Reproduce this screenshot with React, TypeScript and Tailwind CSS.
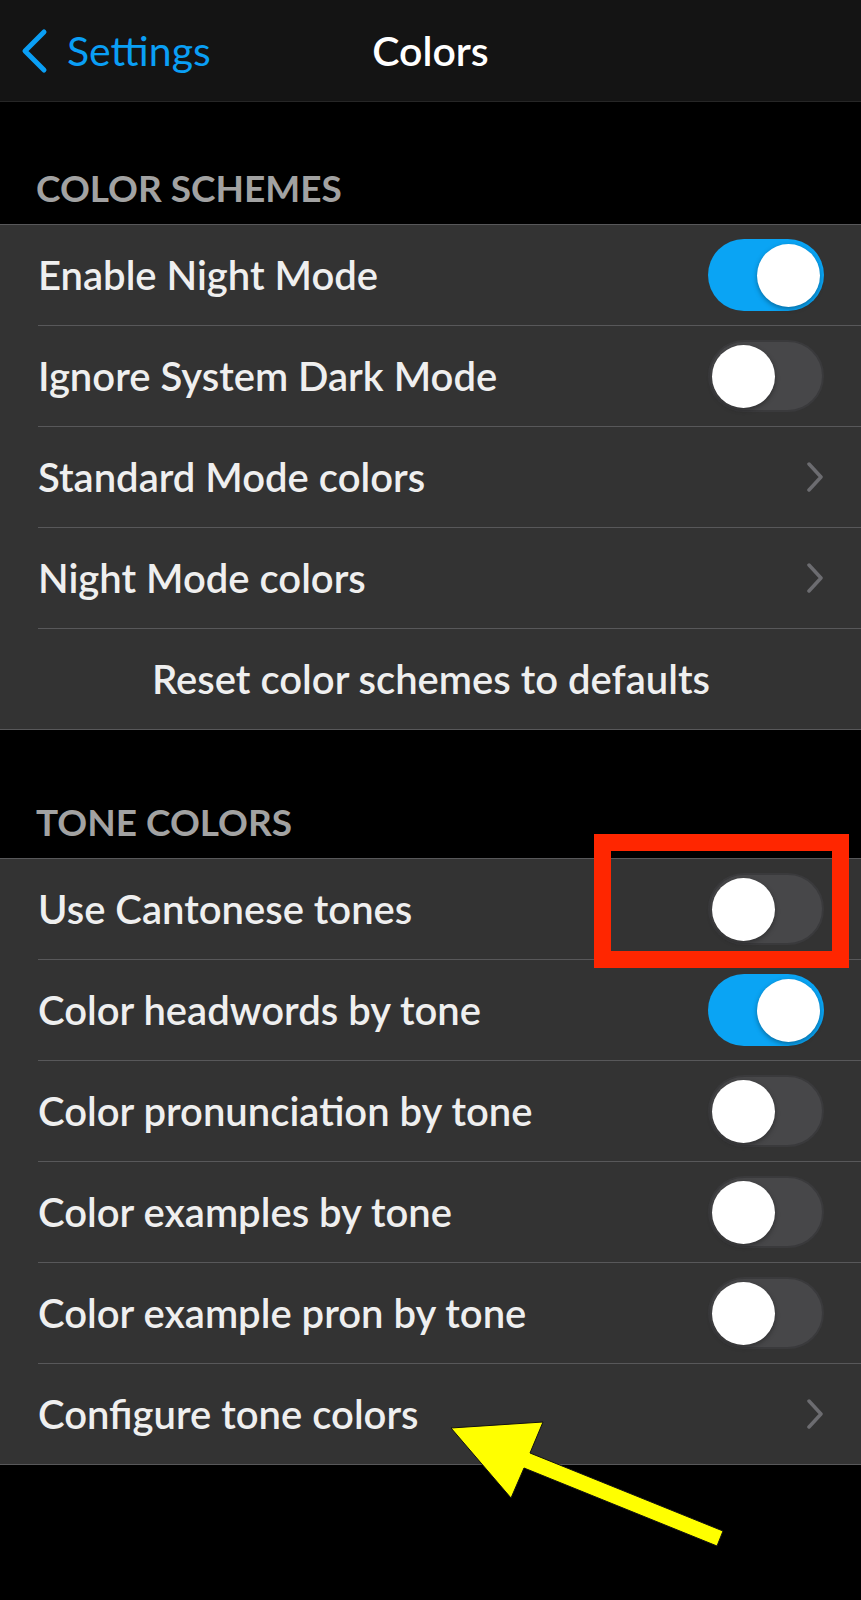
import { ReactNode } from 'react';

type Row = {
  label: string;
  kind: 'toggle' | 'link' | 'action';
  on?: boolean;
};

const schemeRows: Row[] = [
  { label: 'Enable Night Mode', kind: 'toggle', on: true },
  { label: 'Ignore System Dark Mode', kind: 'toggle', on: false },
  { label: 'Standard Mode colors', kind: 'link' },
  { label: 'Night Mode colors', kind: 'link' },
  { label: 'Reset color schemes to defaults', kind: 'action' },
];

const toneRows: Row[] = [
  { label: 'Use Cantonese tones', kind: 'toggle', on: false },
  { label: 'Color headwords by tone', kind: 'toggle', on: true },
  { label: 'Color pronunciation by tone', kind: 'toggle', on: false },
  { label: 'Color examples by tone', kind: 'toggle', on: false },
  { label: 'Color example pron by tone', kind: 'toggle', on: false },
  { label: 'Configure tone colors', kind: 'link' },
];

function Toggle({ on }: { on: boolean }) {
  return (
    <div
      className={
        on
          ? 'w-[116px] h-[72px] rounded-full bg-[#0aa4f4] flex items-center justify-end px-[4px]'
          : 'w-[116px] h-[72px] rounded-full bg-[#474749] border-[2px] border-[#3a3a3c] flex items-center justify-start px-[2px]'
      }
    >
      <div className="w-[63px] h-[63px] rounded-full bg-white shadow-[0_2px_5px_rgba(0,0,0,0.35)]" />
    </div>
  );
}

function Chevron() {
  return (
    <svg width="18" height="30" viewBox="0 0 18 30" className="shrink-0">
      <polyline
        points="3,2 15,15 3,28"
        fill="none"
        stroke="#6c6c70"
        strokeWidth="3.5"
        strokeLinecap="round"
        strokeLinejoin="round"
      />
    </svg>
  );
}

function SettingsRow({ row, last }: { row: Row; last: boolean }) {
  let content: ReactNode;
  if (row.kind === 'action') {
    content = <span className="flex-1 text-center">{row.label}</span>;
  } else {
    content = (
      <>
        <span className="flex-1">{row.label}</span>
        {row.kind === 'toggle' ? <Toggle on={!!row.on} /> : <Chevron />}
      </>
    );
  }
  return (
    <div className="pl-[38px]">
      <div
        className={
          last
            ? 'h-[100px] flex items-center pr-[37px]'
            : 'h-[101px] flex items-center pr-[37px] border-b border-[#58585a]'
        }
      >
        {content}
      </div>
    </div>
  );
}

function Group({ rows }: { rows: Row[] }) {
  return (
    <div className="bg-[#333333] border-y border-[#58585a] text-[40px] font-semibold text-[#efefef]">
      {rows.map((r, i) => (
        <SettingsRow key={r.label} row={r} last={i === rows.length - 1} />
      ))}
    </div>
  );
}

function SectionHeader({ title, height }: { title: string; height: string }) {
  return (
    <div className={`${height} flex items-end pl-[36px] pb-[18px]`}>
      <span className="text-[37px] font-bold text-[#a2a2a2] leading-none">{title}</span>
    </div>
  );
}

export default function App() {
  return (
    <div
      className="relative w-[861px] h-[1600px] bg-black overflow-hidden"
      style={{ fontFamily: 'Lato, "Open Sans", sans-serif' }}
    >
      <div className="h-[102px] bg-[#141414] border-b border-[#262626] relative flex items-center">
        <div className="flex items-center pl-[19px] text-[#0a9ff5] text-[41px]">
          <svg width="30" height="46" viewBox="0 0 30 46">
            <polyline
              points="25,4 6,23 25,42"
              fill="none"
              stroke="#0a9ff5"
              strokeWidth="5"
              strokeLinecap="round"
              strokeLinejoin="round"
            />
          </svg>
          <span className="ml-[18px]">Settings</span>
        </div>
        <div className="absolute inset-0 flex items-center justify-center pointer-events-none">
          <span className="text-[41px] font-semibold text-white">Colors</span>
        </div>
      </div>

      <SectionHeader title="COLOR SCHEMES" height="h-[122px]" />
      <Group rows={schemeRows} />

      <SectionHeader title="TONE COLORS" height="h-[128px]" />
      <Group rows={toneRows} />

      {/* annotation: red box around the Cantonese toggle */}
      <div className="absolute left-[594px] top-[834px] w-[255px] h-[134px] border-[17px] border-[#ff2600]" />

      {/* annotation: yellow arrow */}
      <svg className="absolute left-0 top-0" width="861" height="1600" viewBox="0 0 861 1600">
        <polygon
          points="451,1428 543,1422 530,1453 723,1531 717,1546 524,1468 511,1498"
          fill="#ffff00"
          stroke="#111"
          strokeWidth="1"
          strokeLinejoin="miter"
        />
      </svg>
    </div>
  );
}
